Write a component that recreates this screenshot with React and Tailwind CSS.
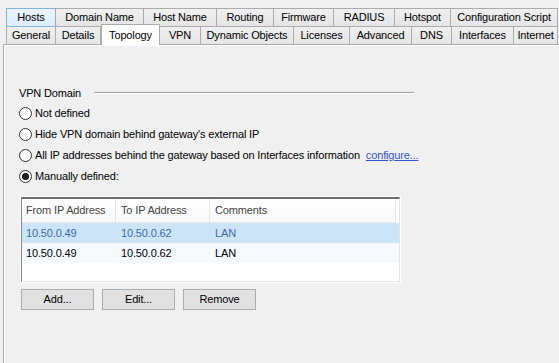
import React from "react";

const row1 = [
  ["Hosts", 49, true],
  ["Domain Name", 88],
  ["Host Name", 73],
  ["Routing", 57],
  ["Firmware", 60],
  ["RADIUS", 61],
  ["Hotspot", 56],
  ["Configuration Script", 107],
];
const row2 = [
  ["General", 49],
  ["Details", 45],
  ["Topology", 59, false, true],
  ["VPN", 41],
  ["Dynamic Objects", 93],
  ["Licenses", 56],
  ["Advanced", 62],
  ["DNS", 40],
  ["Interfaces", 62],
  ["Internet", 44],
];

function Tab({ label, w, hover, selected }) {
  if (selected) {
    return (
      <div
        className="relative z-10 -mt-[2px] h-[21px] shrink-0 border border-b-0 border-[#acacac] bg-white flex items-start justify-center pt-[2px] text-black whitespace-nowrap"
        style={{ width: w }}
      >
        {label}
      </div>
    );
  }
  return (
    <div
      className={
        "h-[19px] shrink-0 -ml-px first:ml-0 border flex items-center justify-center text-black whitespace-nowrap " +
        (hover
          ? "border-[#7eb4ea] bg-gradient-to-b from-[#ecf4fc] to-[#dcecfc] relative z-[5]"
          : "border-[#acacac] bg-gradient-to-b from-[#f0f0f0] to-[#e5e5e5]")
      }
      style={{ width: w + 1 }}
    >
      {label}
    </div>
  );
}

function Radio({ checked, children }) {
  return (
    <div className="flex items-center h-[21px] whitespace-nowrap">
      <span className="w-[13px] h-[13px] rounded-full border border-[#333] bg-white flex items-center justify-center shrink-0">
        {checked && <span className="w-[7px] h-[7px] rounded-full bg-[#1a1a1a]" />}
      </span>
      <span className="ml-[3px]">{children}</span>
    </div>
  );
}

function Btn({ children }) {
  return (
    <div className="w-[73px] h-[21px] border border-[#adadad] bg-[#e1e1e1] flex items-center justify-center text-black">
      {children}
    </div>
  );
}

export default function App() {
  return (
    <div
      className="w-[559px] h-[363px] bg-[#f0f0f0] overflow-hidden text-[11px] tracking-[-0.15px] text-black"
      style={{ fontFamily: '"Liberation Sans", Arial, sans-serif' }}
    >
      <div className="pt-[8px] pl-[6px]">
        <div className="flex">
          {row1.map(([l, w, h]) => (
            <Tab key={l} label={l} w={w} hover={h} />
          ))}
        </div>
        <div className="flex -mt-px">
          {row2.map(([l, w, h, s]) => (
            <Tab key={l} label={l} w={w} hover={h} selected={s} />
          ))}
        </div>
      </div>
      <div className="ml-[3px] -mt-[1px] h-[320px] border-l border-t border-[#acacac] bg-[#f0f0f0]">
        <div className="h-full border-l border-t border-white pl-[14px] pt-[39px]">
          <div className="flex items-center h-[16px]">
            <span>VPN Domain</span>
            <span className="ml-[13px] w-[320px] h-px bg-[#a0a0a0] border-b border-white box-content" />
          </div>
          <div className="mt-[2px]">
            <Radio>Not defined</Radio>
            <Radio>Hide VPN domain behind gateway's external IP</Radio>
            <Radio>
              All IP addresses behind the gateway based on Interfaces information
              <span className="ml-[6px] text-[#3355cc] underline">configure...</span>
            </Radio>
            <Radio checked>Manually defined:</Radio>
          </div>
          <div className="mt-[10px] ml-[2px] w-[379px] h-[85px] border border-[#828282] border-t-2 border-t-[#6e6e6e] bg-white border-r-[#e3e3e3] border-b-[#e3e3e3] outline outline-1 outline-white">
            <div className="flex h-[24px] bg-gradient-to-b from-white to-[#f9f9f9] border-b border-[#e5e5e5] w-[374px] border-r whitespace-nowrap">
              <div className="w-[94px] border-r border-[#e5e5e5] pl-[4px] flex items-center text-[#444]">From IP Address</div>
              <div className="w-[94px] border-r border-[#e5e5e5] pl-[5px] flex items-center text-[#444]">To IP Address</div>
              <div className="pl-[5px] flex items-center text-[#444]">Comments</div>
            </div>
            <div className="flex h-[20px] bg-[#cce4f7] text-[#3d6aa8]">
              <div className="w-[94px] pl-[4px] flex items-center">10.50.0.49</div>
              <div className="w-[94px] pl-[5px] flex items-center">10.50.0.62</div>
              <div className="pl-[5px] flex items-center">LAN</div>
            </div>
            <div className="flex h-[20px] bg-[#f6f9fe]">
              <div className="w-[94px] pl-[4px] flex items-center">10.50.0.49</div>
              <div className="w-[94px] pl-[5px] flex items-center">10.50.0.62</div>
              <div className="pl-[5px] flex items-center">LAN</div>
            </div>
          </div>
          <div className="mt-[7px] ml-[2px] flex gap-[8px]">
            <Btn>Add...</Btn>
            <Btn>Edit...</Btn>
            <Btn>Remove</Btn>
          </div>
        </div>
      </div>
    </div>
  );
}
